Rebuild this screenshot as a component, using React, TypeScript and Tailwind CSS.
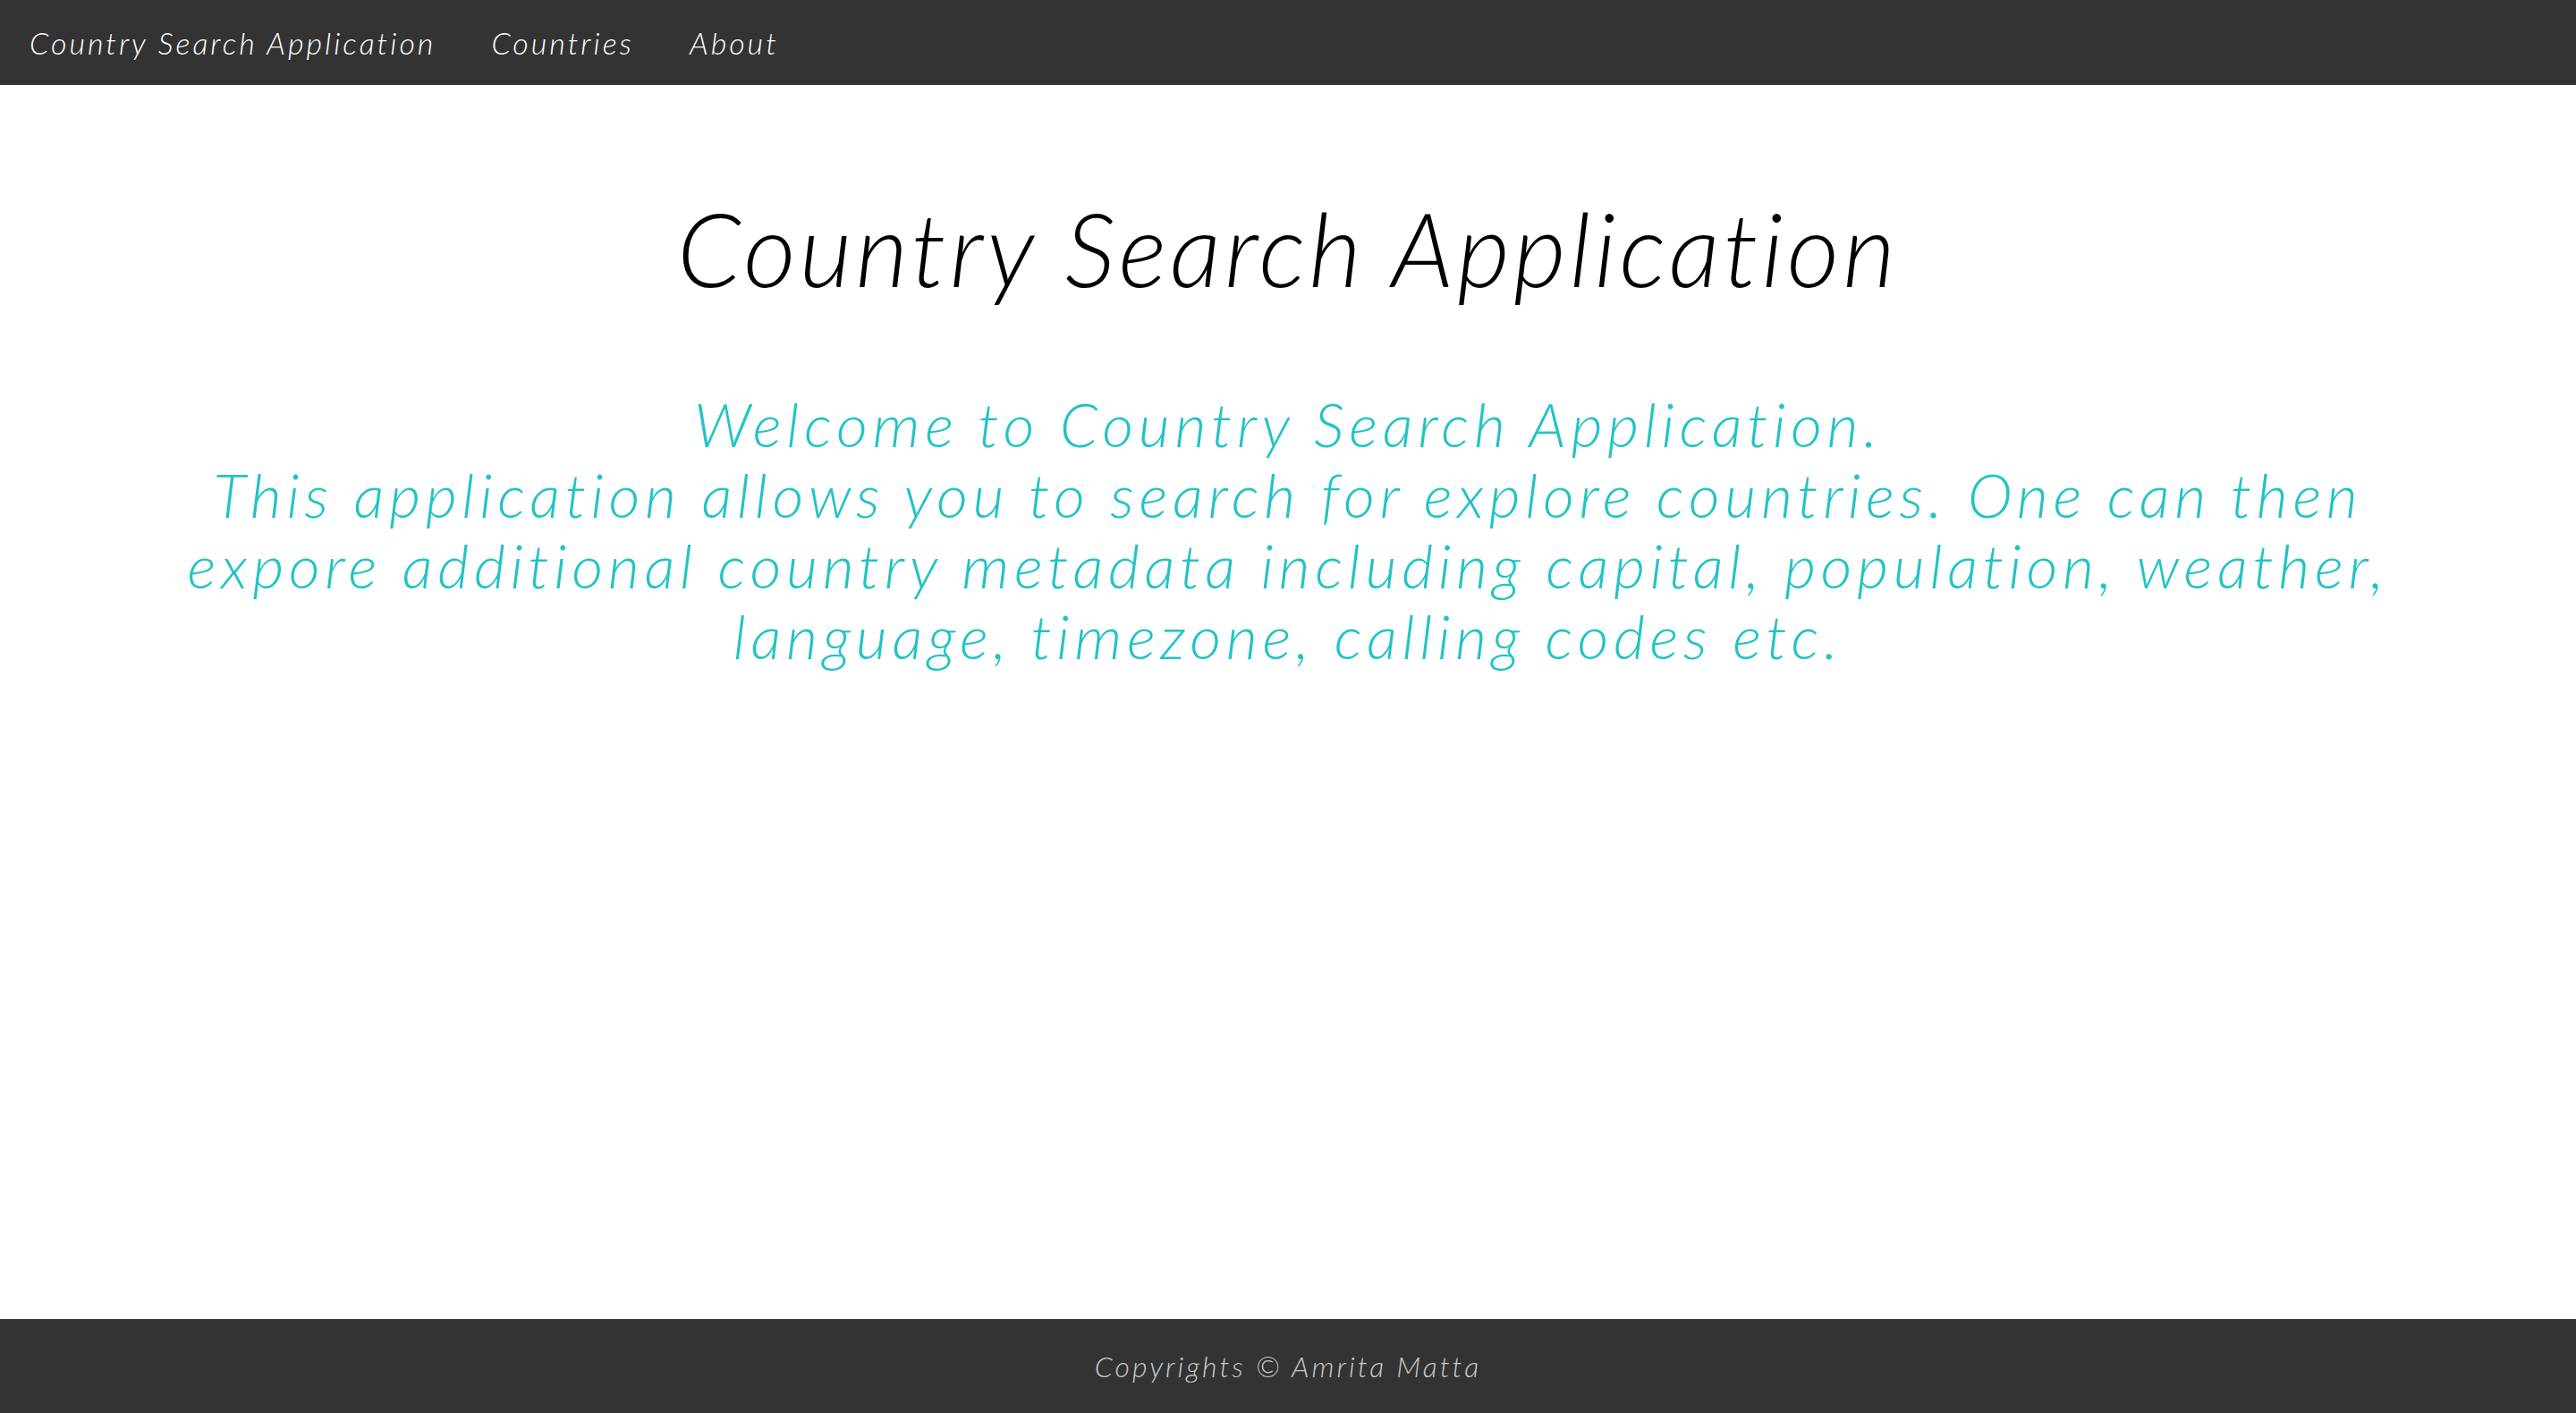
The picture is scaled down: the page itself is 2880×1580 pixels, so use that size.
export default function App() {
  const font = { fontFamily: "Lato, 'Open Sans', sans-serif" };
  return (
    <div className="flex min-h-screen flex-col bg-white [font-variant-ligatures:none]" style={font}>
      <nav className="flex h-[95px] items-center gap-[62px] bg-[#333333] px-[33px] text-[34px] font-light italic tracking-[3px] text-white">
        <span>Country Search Application</span>
        <a>Countries</a>
        <a>About</a>
      </nav>
      <main className="flex-1 px-[60px] text-center">
        <h1 className="mt-[114px] text-[114px] font-light italic leading-[1.2] tracking-[4px] text-black">
          Country Search Application
        </h1>
        <p className="mt-[88px] text-[68px] font-light italic leading-[79px] tracking-[5.6px] text-[#22c3c5]">
          Welcome to Country Search Application.
          <br />
          This application allows you to search for explore countries. One can then
          <br />
          expore additional country metadata including capital, population, weather,
          <br />
          language, timezone, calling codes etc.
        </p>
      </main>
      <footer className="flex h-[105px] items-center justify-center bg-[#333333] text-[32px] font-light italic tracking-[3px] text-[#c8c8c8]">
        Copyrights © Amrita Matta
      </footer>
    </div>
  );
}
